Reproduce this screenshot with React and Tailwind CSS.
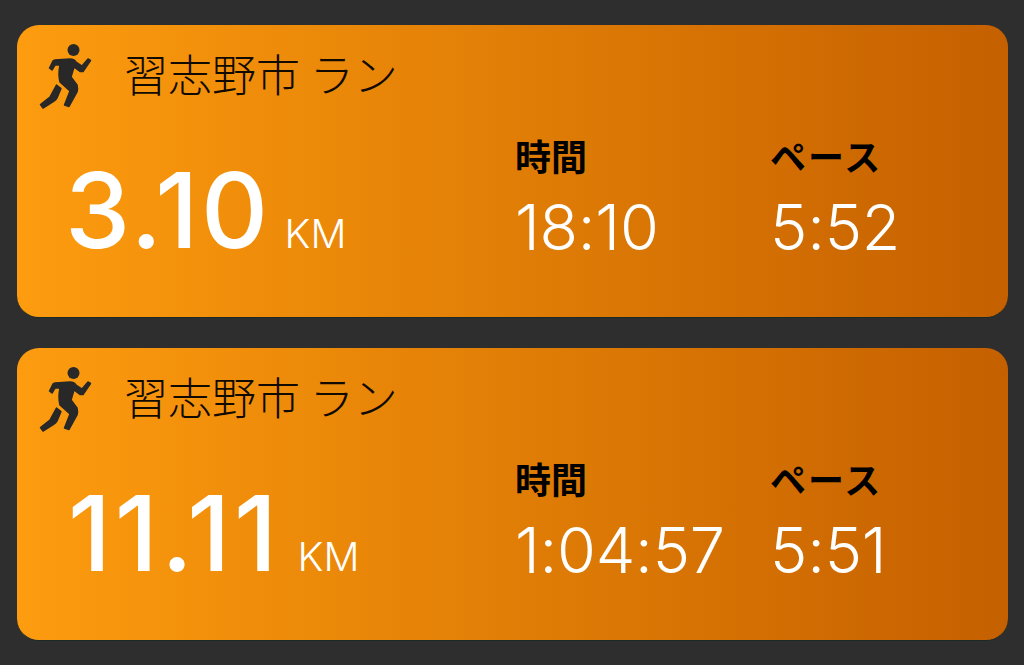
const cjk = '"Noto Sans CJK JP", sans-serif';

function RunnerIcon() {
  return (
    <svg viewBox="0 0 70 80" className="w-[70px] h-[80px] shrink-0" fill="#282828" stroke="#282828" strokeWidth="1.5" strokeLinejoin="round">
      <circle cx="43.5" cy="15" r="6" stroke="none" />
      <path d="M25 25 L40 24 Q44 24 46 27 L52 31 L58 24 L60.5 25.5 L53 36.5 L50 36.5 L44 32 L41 42 L47 50 Q48 54 47 57 L39 71.5 L34.5 70 L40 56 L30 47 Q28 40 30 30 L25 30 L22 35 L19.5 33 L23 26 Z" />
      <path d="M26.5 50 L31 53.5 L27 63 Q26 65 24 66 L13 73 L10.5 69.5 L20 62 Z" />
    </svg>
  );
}

function Stat({ label, value, className, labelClass = '' }) {
  return (
    <div className={className}>
      <div className={`text-[36px] leading-[40px] font-bold text-black ${labelClass}`} style={{ fontFamily: cjk }}>{label}</div>
      <div className="text-[63px] leading-[64px] mt-[20px] font-light text-white font-['Inter'] tracking-[-0.25px]">{value}</div>
    </div>
  );
}

function Card({ distance, distanceClass, time, pace }) {
  return (
    <div className="h-[293px] rounded-[22px] bg-gradient-to-r from-[#fd9c0f] to-[#c56000] pl-[13px] pt-[10px] border-b border-[#1c2a26]">
      <div className="flex items-start h-[80px]">
        <RunnerIcon />
        <div className="ml-[24px] mt-[8px] text-[44px] leading-[60px] font-light text-[#100a00]" style={{ fontFamily: cjk }}>習志野市 ラン</div>
      </div>
      <div className="flex mt-[20px]">
        <div className="w-[485px] shrink-0 flex items-baseline pl-[35px] pt-[17px]">
          <span className={`text-[104px] leading-[116px] font-medium text-white font-['Inter'] ${distanceClass}`}>{distance}</span>
          <span className="text-[40px] font-light text-white font-['Inter']">KM</span>
        </div>
        <Stat label="時間" value={time} className="w-[255px] shrink-0" />
        <Stat label="ペース" value={pace} labelClass="tracking-[2px]" />
      </div>
    </div>
  );
}

export default function App() {
  return (
    <div className="w-[1024px] h-[665px] bg-[#2e2e2e] pl-[17px] pr-[16px] pt-[25px] flex flex-col gap-[30px] overflow-hidden">
      <Card distance="3.10" distanceClass="tracking-[2.5px] mr-[14px]" time="18:10" pace="5:52" />
      <Card distance="11.11" distanceClass="tracking-[3.5px] ml-[3px] mr-[17px]" time="1:04:57" pace="5:51" />
    </div>
  );
}
